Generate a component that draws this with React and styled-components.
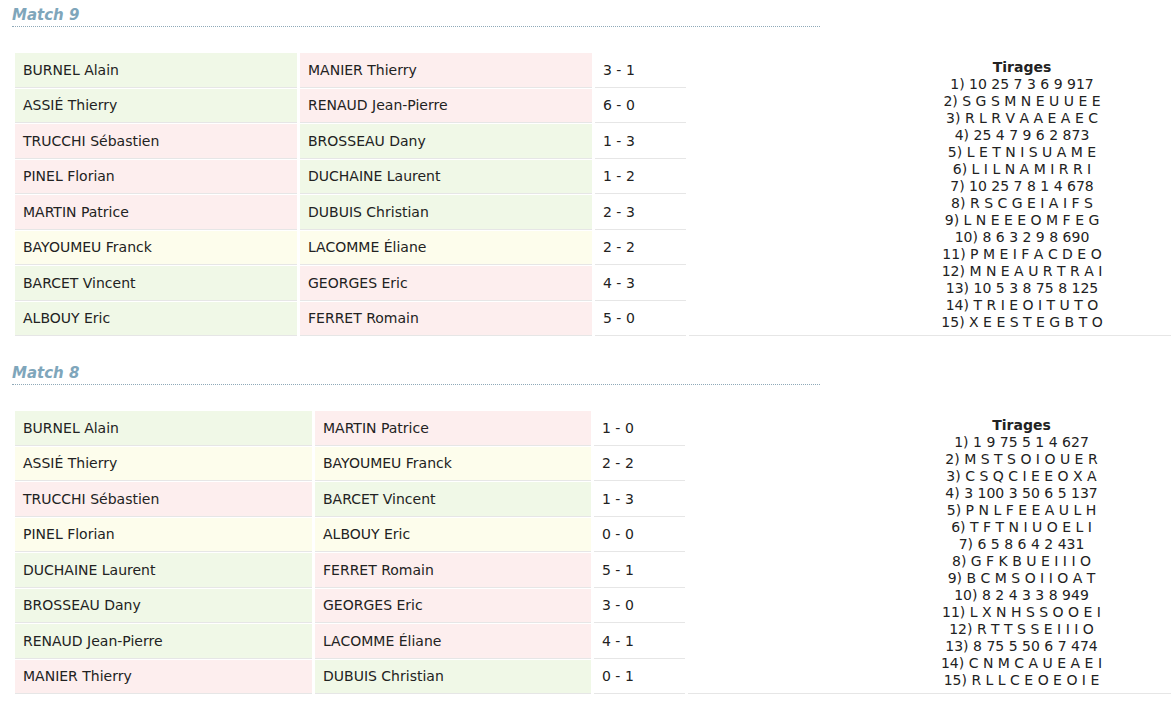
import React from "react";
import styled, { createGlobalStyle } from "styled-components";

const GlobalStyle = createGlobalStyle`
  body {
    margin: 0;
    background: #fff;
    font-family: "DejaVu Sans", Verdana, sans-serif;
    color: #222;
  }
`;

const Page = styled.div`
  padding: 7px 0 0 12px;
`;

const Section = styled.section`
  margin-bottom: 28px;
`;

const MatchTitle = styled.h2`
  margin: 0 0 25px 0;
  width: 808px;
  padding-bottom: 3px;
  border-bottom: 1px dotted #8fa9b8;
  font-size: 15px;
  font-style: italic;
  font-weight: bold;
  line-height: 16px;
  color: #7fa6bb;
`;

const Table = styled.table`
  width: 100%;
  border-collapse: separate;
  border-spacing: 3px 1px;
  font-size: 14px;
`;

const bg = {
  win: "#f0f8e7",
  loss: "#fdeeee",
  draw: "#fdfdec",
};

const NameCell = styled.td`
  width: ${(p) => p.$w}px;
  padding: 0 8px;
  box-sizing: border-box;
  background: ${(p) => bg[p.$res]};
  border-bottom: 1px solid #e6e6e6;
  vertical-align: middle;
`;

const ScoreCell = styled.td`
  width: 91px;
  padding: 0 8px;
  box-sizing: border-box;
  border-bottom: 1px solid #e6e6e6;
  vertical-align: middle;
`;

const DrawCell = styled.td`
  padding: 6px 0 4px 184px;
  text-align: center;
  vertical-align: middle;
  border-bottom: 1px solid #e6e6e6;
  font-size: 14px;
  line-height: 17px;
`;

const DrawTitle = styled.div`
  font-weight: bold;
`;

const matches = [
  {
    title: "Match 9",
    widths: [282, 292],
    games: [
      ["BURNEL Alain", "MANIER Thierry", 3, 1],
      ["ASSIÉ Thierry", "RENAUD Jean-Pierre", 6, 0],
      ["TRUCCHI Sébastien", "BROSSEAU Dany", 1, 3],
      ["PINEL Florian", "DUCHAINE Laurent", 1, 2],
      ["MARTIN Patrice", "DUBUIS Christian", 2, 3],
      ["BAYOUMEU Franck", "LACOMME Éliane", 2, 2],
      ["BARCET Vincent", "GEORGES Eric", 4, 3],
      ["ALBOUY Eric", "FERRET Romain", 5, 0],
    ],
    draws: [
      "10 25 7 3 6 9 917",
      "S G S M N E U U E E",
      "R L R V A A E A E C",
      "25 4 7 9 6 2 873",
      "L E T N I S U A M E",
      "L I L N A M I R R I",
      "10 25 7 8 1 4 678",
      "R S C G E I A I F S",
      "L N E E E O M F E G",
      "8 6 3 2 9 8 690",
      "P M E I F A C D E O",
      "M N E A U R T R A I",
      "10 5 3 8 75 8 125",
      "T R I E O I T U T O",
      "X E E S T E G B T O",
    ],
  },
  {
    title: "Match 8",
    widths: [297, 276],
    games: [
      ["BURNEL Alain", "MARTIN Patrice", 1, 0],
      ["ASSIÉ Thierry", "BAYOUMEU Franck", 2, 2],
      ["TRUCCHI Sébastien", "BARCET Vincent", 1, 3],
      ["PINEL Florian", "ALBOUY Eric", 0, 0],
      ["DUCHAINE Laurent", "FERRET Romain", 5, 1],
      ["BROSSEAU Dany", "GEORGES Eric", 3, 0],
      ["RENAUD Jean-Pierre", "LACOMME Éliane", 4, 1],
      ["MANIER Thierry", "DUBUIS Christian", 0, 1],
    ],
    draws: [
      "1 9 75 5 1 4 627",
      "M S T S O I O U E R",
      "C S Q C I E E O X A",
      "3 100 3 50 6 5 137",
      "P N L F E E A U L H",
      "T F T N I U O E L I",
      "6 5 8 6 4 2 431",
      "G F K B U E I I I O",
      "B C M S O I I O A T",
      "8 2 4 3 3 8 949",
      "L X N H S S O O E I",
      "R T T S S E I I I O",
      "8 75 5 50 6 7 474",
      "C N M C A U E A E I",
      "R L L C E O E O I E",
    ],
  },
];

const result = (a, b) => (a > b ? "win" : a < b ? "loss" : "draw");
const flip = { win: "loss", loss: "win", draw: "draw" };

function Match({ title, widths, games, draws }) {
  return (
    <Section>
      <MatchTitle>{title}</MatchTitle>
      <Table>
        <tbody>
          {games.map(([home, away, s1, s2], i) => {
            const r = result(s1, s2);
            return (
              <tr key={i}>
                <NameCell $w={widths[0]} $res={r}>{home}</NameCell>
                <NameCell $w={widths[1]} $res={flip[r]}>{away}</NameCell>
                <ScoreCell>{s1} - {s2}</ScoreCell>
                {i === 0 && (
                  <DrawCell rowSpan={games.length}>
                    <DrawTitle>Tirages</DrawTitle>
                    {draws.map((d, j) => (
                      <div key={j}>{j + 1}) {d}</div>
                    ))}
                  </DrawCell>
                )}
              </tr>
            );
          })}
        </tbody>
      </Table>
    </Section>
  );
}

export default function App() {
  return (
    <Page>
      <GlobalStyle />
      {matches.map((m) => (
        <Match key={m.title} {...m} />
      ))}
    </Page>
  );
}
